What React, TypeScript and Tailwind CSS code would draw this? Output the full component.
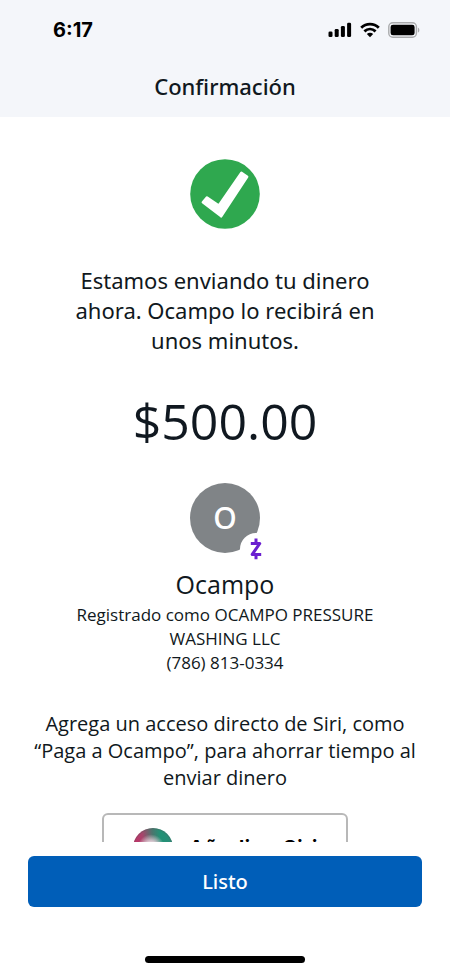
import React from 'react';

const SignalIcon = () => (
  <svg width="24" height="16" viewBox="0 0 24 16" fill="#000" aria-hidden="true">
    <rect x="0.5" y="9.5" width="4" height="5.5" rx="1.3" />
    <rect x="6.7" y="7" width="4" height="8" rx="1.3" />
    <rect x="12.9" y="4" width="4" height="11" rx="1.3" />
    <rect x="19.1" y="0.8" width="4" height="14.2" rx="1.3" />
  </svg>
);

const WifiIcon = () => (
  <svg width="20" height="16" viewBox="0 0 20 16" fill="none" stroke="#000" strokeWidth="2.8" aria-hidden="true">
    <path d="M1.2 5.8C6.2 1 13.8 1 18.8 5.8" />
    <path d="M4.4 9.4C7.7 6.4 12.3 6.4 15.6 9.4" />
    <path d="M10 15.2L6.8 12C8.6 10.3 11.4 10.3 13.2 12Z" fill="#000" stroke="none" />
  </svg>
);

const BatteryIcon = () => (
  <svg width="32" height="16" viewBox="0 0 32 16" fill="none" aria-hidden="true">
    <rect x="0.8" y="0.8" width="27.6" height="14.4" rx="4" stroke="#a9aaac" strokeWidth="1.4" />
    <rect x="2.6" y="2.7" width="24" height="10.6" rx="2.4" fill="#000" />
    <path d="M29.9 5.4C31.8 6.2 31.8 9.8 29.9 10.6Z" fill="#a9aaac" />
  </svg>
);

const SuccessIcon = () => (
  <svg width="70" height="70" viewBox="0 0 70 70" role="img" aria-label="Enviado">
    <circle cx="35" cy="35" r="34.8" fill="#2fa84f" />
    <path
      d="M12.8 43.2L17 38.4L28.8 46.4L51.4 13.8L57.2 17.8L31.2 57.4Z"
      fill="#fff"
      stroke="#fff"
      strokeWidth="2.4"
      strokeLinejoin="round"
    />
  </svg>
);

const ZelleIcon = () => (
  <svg width="12" height="22" viewBox="0 0 12 22" fill="none" stroke="#6a1fd0" strokeWidth="3" aria-hidden="true">
    <path d="M0.8 5.4H9.8L2.2 16.4H11.2" strokeLinejoin="round" />
    <path d="M6 0.6V5M6 17V21.2" />
  </svg>
);

const SiriIcon = () => (
  <svg width="40" height="40" viewBox="0 0 40 40" aria-hidden="true">
    <defs>
      <linearGradient id="orb" x1="0" y1="0.4" x2="1" y2="0.3">
        <stop offset="0" stopColor="#c92a66" />
        <stop offset="0.25" stopColor="#a8456c" />
        <stop offset="0.5" stopColor="#4d746d" />
        <stop offset="0.7" stopColor="#219276" />
        <stop offset="1" stopColor="#2a8c78" />
      </linearGradient>
      <radialGradient id="glow" cx="0.45" cy="0.5" r="0.36">
        <stop offset="0" stopColor="#fff" />
        <stop offset="0.5" stopColor="#f6dbe6" stopOpacity="0.8" />
        <stop offset="1" stopColor="#f6dbe6" stopOpacity="0" />
      </radialGradient>
    </defs>
    <circle cx="20" cy="20" r="20" fill="url(#orb)" />
    <circle cx="20" cy="20" r="19.3" fill="none" stroke="#55605f" strokeOpacity="0.4" />
    <circle cx="20" cy="20" r="19" fill="url(#glow)" />
  </svg>
);

const StatusBar = () => (
  <div className="flex items-center justify-between pt-5 pl-[53px] pr-[30px]">
    <span className="font-[Inter,sans-serif] text-[20px] leading-5 font-bold text-black">6:17</span>
    <div className="flex items-center gap-2">
      <SignalIcon />
      <WifiIcon />
      <BatteryIcon />
    </div>
  </div>
);

const Recipient = () => (
  <section className="flex flex-col items-center text-center">
    <div className="relative flex h-[70px] w-[70px] items-center justify-center rounded-full bg-[#808487]">
      <span className="font-['Noto_Sans',sans-serif] text-[30px] leading-8 font-medium text-white">O</span>
      <span className="absolute -right-3 -bottom-3 flex h-8 w-8 items-center justify-center rounded-full bg-white">
        <ZelleIcon />
      </span>
    </div>
    <h2 className="mt-3 text-[25px] leading-[38px]">Ocampo</h2>
    <p className="max-w-80 text-[17px] leading-6">Registrado como OCAMPO PRESSURE WASHING LLC</p>
    <p className="text-[17px] leading-6">(786) 813-0334</p>
  </section>
);

const App: React.FC = () => {
  return (
    <div className="flex h-screen w-full flex-col bg-white font-['Open_Sans',sans-serif] text-[#101820]">
      <header className="shrink-0 bg-[#f4f6fa] pb-4">
        <StatusBar />
        <h1 className="mt-8 text-center font-['Noto_Sans',sans-serif] text-[22px] leading-[29px] font-medium">Confirmación</h1>
      </header>

      <main className="flex min-h-0 flex-1 flex-col items-center overflow-y-auto px-8 [scrollbar-width:none]">
        <div className="mt-[42px] shrink-0">
          <SuccessIcon />
        </div>
        <p className="mt-9 max-w-80 text-center font-['Noto_Sans',sans-serif] text-[22px] leading-[30px]">
          Estamos enviando tu dinero ahora. Ocampo lo recibirá en unos minutos.
        </p>
        <p className="mt-9 mb-8 text-[50px] leading-[60px]">$500.00</p>
        <Recipient />
        <p className="mt-[35px] max-w-96 text-center text-[20px] leading-[27px]">
          Agrega un acceso directo de Siri, como “Paga a Ocampo”, para ahorrar tiempo al enviar dinero
        </p>
        <button className="mt-[22px] mb-6 flex h-[70px] w-[246px] shrink-0 items-center justify-center gap-4 rounded-md border-2 border-[#b8b8b8] font-[Inter,sans-serif] text-[22px] font-semibold text-black">
          <SiriIcon />
          Añadir a Siri
        </button>
      </main>

      <footer className="flex shrink-0 flex-col items-center px-7 pt-[14px] pb-3">
        <button className="h-[51px] w-full rounded-md bg-[#005eb8] font-['Noto_Sans',sans-serif] text-[20px] font-medium text-white">Listo</button>
        <div className="mt-[49px] h-[7px] w-40 rounded-full bg-black" />
      </footer>
    </div>
  );
};

export default App;
